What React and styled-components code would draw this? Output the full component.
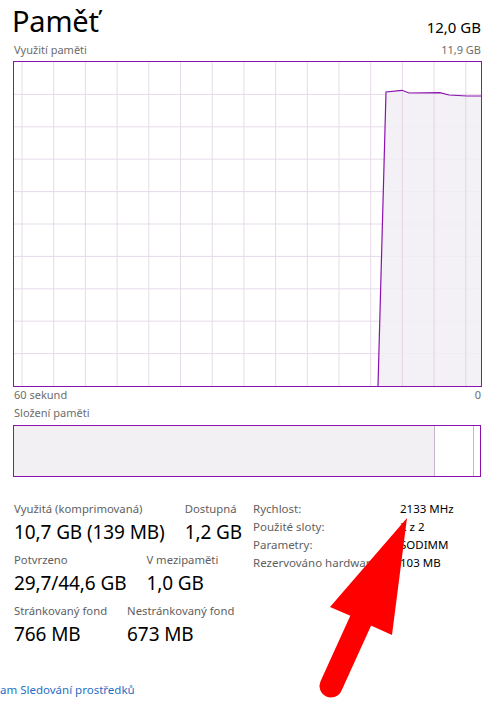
import React from "react";
import styled, { createGlobalStyle } from "styled-components";

const Global = createGlobalStyle`
  html, body { margin: 0; padding: 0; background: #fff; }
  body { font-family: "Segoe UI", "Noto Sans", "Open Sans", sans-serif; color: #000; }
`;

const Page = styled.div`
  position: relative;
  width: 499px;
  height: 709px;
  overflow: hidden;
  box-sizing: border-box;
  padding: 0 18px 0 14px;
`;

const Header = styled.div`
  display: flex;
  justify-content: space-between;
  align-items: flex-end;
  height: 39px;
`;

const Title = styled.div`
  font-size: 29px;
  line-height: 36px;
  margin-left: -2px;
  letter-spacing: -0.2px;
`;

const Total = styled.div`
  font-size: 15px;
  line-height: 18px;
  margin-bottom: 3px;
`;

const CaptionRow = styled.div`
  display: flex;
  justify-content: space-between;
  font-size: 11px;
  line-height: 14px;
  color: #6d6d6d;
  margin-top: ${p => p.$mt || 0}px;
`;

const ChartBox = styled.div`
  margin-top: 4px;
  width: 467px;
  height: 324px;
  border: 1px solid #8b12ae;
  box-sizing: content-box;
  margin-left: -1px;
`;

const Composition = styled.div`
  margin-top: 5px;
  margin-left: -1px;
  height: 50px;
  border: 1px solid #8b12ae;
  display: flex;
`;

const Segment = styled.div`
  width: ${p => p.$w}px;
  flex: ${p => (p.$grow ? 1 : "none")};
  background: ${p => p.$bg};
  border-right: ${p => (p.$line ? "1px solid #c8b4cc" : "none")};
`;

const Stats = styled.div`
  display: flex;
  margin-top: 24px;
`;

const LeftStats = styled.div`
  width: 239px;
  display: flex;
  flex-direction: column;
  gap: 5px;
`;

const StatRow = styled.div`
  display: flex;
  gap: 20px;
`;

const Stat = styled.div`
  display: flex;
  flex-direction: column;
`;

const StatLabel = styled.div`
  font-size: 11.3px;
  line-height: 16px;
  color: #5f5f5f;
  white-space: nowrap;
`;

const StatValue = styled.div`
  font-size: 19px;
  line-height: 30px;
  white-space: nowrap;
  letter-spacing: -0.1px;
`;

const Props = styled.div`
  display: grid;
  grid-template-columns: 147px auto;
  grid-auto-rows: 18px;
  font-size: 11.5px;
  align-content: start;
`;

const PropLabel = styled.div`
  color: #5f5f5f;
  white-space: nowrap;
`;

const PropValue = styled.div`
  color: #000;
  white-space: nowrap;
`;

const Link = styled.div`
  margin-top: 33px;
  margin-left: -14px;
  font-size: 11.5px;
  color: #1f6fc5;
  white-space: nowrap;
`;

const ArrowSvg = styled.svg`
  position: absolute;
  left: 0;
  top: 0;
  pointer-events: none;
`;

const gridX = Array.from({ length: 15 }, (_, k) => 8 + 31.7 * k);
const gridY = Array.from({ length: 9 }, (_, k) => 32.4 * (k + 1));

function Chart() {
  const pts = "364,324 372,30 388,28.3 395,31 426,30.7 435,33 453,34 467,34";
  return (
    <ChartBox>
      <svg width="467" height="324" viewBox="0 0 467 324" style={{ display: "block" }}>
        {gridX.map((x, i) => (
          <line key={"x" + i} x1={x} y1="0" x2={x} y2="324" stroke="#e6dbe9" strokeWidth="1" />
        ))}
        {gridY.map((y, i) => (
          <line key={"y" + i} x1="0" y1={y} x2="467" y2={y} stroke="#e6dbe9" strokeWidth="1" />
        ))}
        <polygon points={pts + " 467,324"} fill="#f1eef3" fillOpacity="0.85" />
        {gridX.filter(x => x > 364).map((x, i) => (
          <line key={"g" + i} x1={x} y1="30" x2={x} y2="324" stroke="#e3d6e6" strokeWidth="1" />
        ))}
        <polyline points={pts} fill="none" stroke="#8b12ae" strokeWidth="1.2" />
      </svg>
    </ChartBox>
  );
}

export default function App() {
  return (
    <>
      <Global />
      <Page>
        <Header>
          <Title>Paměť</Title>
          <Total>12,0 GB</Total>
        </Header>
        <CaptionRow $mt={4}>
          <span>Využití paměti</span>
          <span>11,9 GB</span>
        </CaptionRow>
        <Chart />
        <CaptionRow $mt={1}>
          <span>60 sekund</span>
          <span>0</span>
        </CaptionRow>
        <CaptionRow $mt={4}>
          <span>Složení paměti</span>
        </CaptionRow>
        <Composition>
          <Segment $w={420} $bg="#f3f0f4" $line />
          <Segment $w={38} $bg="#fff" $line />
          <Segment $grow $bg="#fff" />
        </Composition>
        <Stats>
          <LeftStats>
            <StatRow>
              <Stat>
                <StatLabel>Využitá (komprimovaná)</StatLabel>
                <StatValue>10,7 GB (139 MB)</StatValue>
              </Stat>
              <Stat>
                <StatLabel>Dostupná</StatLabel>
                <StatValue>1,2 GB</StatValue>
              </Stat>
            </StatRow>
            <StatRow>
              <Stat>
                <StatLabel>Potvrzeno</StatLabel>
                <StatValue>29,7/44,6 GB</StatValue>
              </Stat>
              <Stat>
                <StatLabel>V mezipaměti</StatLabel>
                <StatValue>1,0 GB</StatValue>
              </Stat>
            </StatRow>
            <StatRow>
              <Stat>
                <StatLabel>Stránkovaný fond</StatLabel>
                <StatValue>766 MB</StatValue>
              </Stat>
              <Stat>
                <StatLabel>Nestránkovaný fond</StatLabel>
                <StatValue>673 MB</StatValue>
              </Stat>
            </StatRow>
          </LeftStats>
          <Props>
            <PropLabel>Rychlost:</PropLabel>
            <PropValue>2133 MHz</PropValue>
            <PropLabel>Použité sloty:</PropLabel>
            <PropValue>2 z 2</PropValue>
            <PropLabel>Parametry:</PropLabel>
            <PropValue>SODIMM</PropValue>
            <PropLabel>Rezervováno hardwarem:</PropLabel>
            <PropValue>103 MB</PropValue>
          </Props>
        </Stats>
        <Link>am Sledování prostředků</Link>
        <ArrowSvg width="499" height="709" viewBox="0 0 499 709">
          <polygon points="407,518 330,607 351,616 372,626 392,635" fill="#ff0000" />
          <line x1="361" y1="620" x2="331" y2="686" stroke="#ff0000" strokeWidth="23" strokeLinecap="round" />
        </ArrowSvg>
      </Page>
    </>
  );
}
